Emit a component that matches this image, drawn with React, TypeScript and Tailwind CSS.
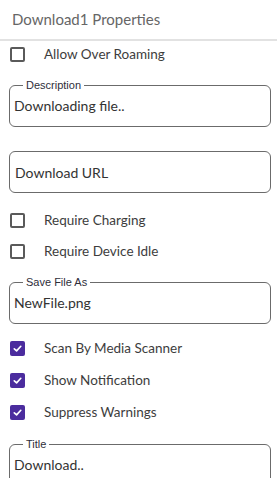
import React from "react";

const font = { fontFamily: "Lato, 'Open Sans', sans-serif" };

function Check({ checked, label, className = "" }: { checked?: boolean; label: string; className?: string }) {
  return (
    <div className={`flex h-[26px] items-center ${className}`}>
      <div className="ml-[10px] flex h-[15px] w-[15px] items-center justify-center">
        {checked ? (
          <div className="flex h-[15px] w-[15px] items-center justify-center rounded-[2px] bg-[#4b2c9e]">
            <svg width="11" height="11" viewBox="0 0 12 12" fill="none">
              <path d="M2.5 6.3 L5 8.6 L9.6 3.6" stroke="white" strokeWidth="1.8" strokeLinecap="round" strokeLinejoin="round" />
            </svg>
          </div>
        ) : (
          <div className="h-[15px] w-[15px] rounded-[2px] border-2 border-[#5a5a5a]" />
        )}
      </div>
      <span className="ml-[19px] text-[13.5px] text-[#3d3d3d]">{label}</span>
    </div>
  );
}

function Field({ legend, value, className = "" }: { legend?: string; value: string; className?: string }) {
  if (!legend) {
    return (
      <div className={`ml-[9px] mr-[6px] flex h-[42px] items-center rounded-[6px] border border-[#6b6b6b] pl-[5px] ${className}`}>
        <span className="text-[14px] text-[#333]">{value}</span>
      </div>
    );
  }
  return (
    <fieldset className={`ml-[9px] mr-[6px] h-[48px] rounded-[6px] border border-[#6b6b6b] px-[4px] ${className}`}>
      <legend
        className="ml-[9px] px-[3px] text-[11px] leading-[13px] text-[#2e2e3a]"
        style={{ fontFamily: "'Liberation Sans', Arial, sans-serif" }}
      >
        {legend}
      </legend>
      <div className="flex h-[30px] items-center pb-[3px]">
        <span className="text-[14px] text-[#333]">{value}</span>
      </div>
    </fieldset>
  );
}

export default function App() {
  return (
    <div className="h-[478px] w-[277px] overflow-hidden bg-white" style={font}>
      <div className="flex h-[39px] items-center pl-[12px] text-[15px] text-[#666]">Download1 Properties</div>
      <div className="h-[2px] bg-[#e2e2e2]" />
      <Check label="Allow Over Roaming" />
      <Field legend="Description" value="Downloading file.." className="mt-[12px]" />
      <Field value="Download URL" className="mt-[24px]" />
      <Check label="Require Charging" className="mt-[14px]" />
      <Check label="Require Device Idle" className="mt-[5px]" />
      <Field legend="Save File As" value="NewFile.png" className="mt-[12px]" />
      <Check checked label="Scan By Media Scanner" className="mt-[11px]" />
      <Check checked label="Show Notification" className="mt-[6px]" />
      <Check checked label="Suppress Warnings" className="mt-[6px]" />
      <Field legend="Title" value="Download.." className="mt-[13px]" />
    </div>
  );
}
